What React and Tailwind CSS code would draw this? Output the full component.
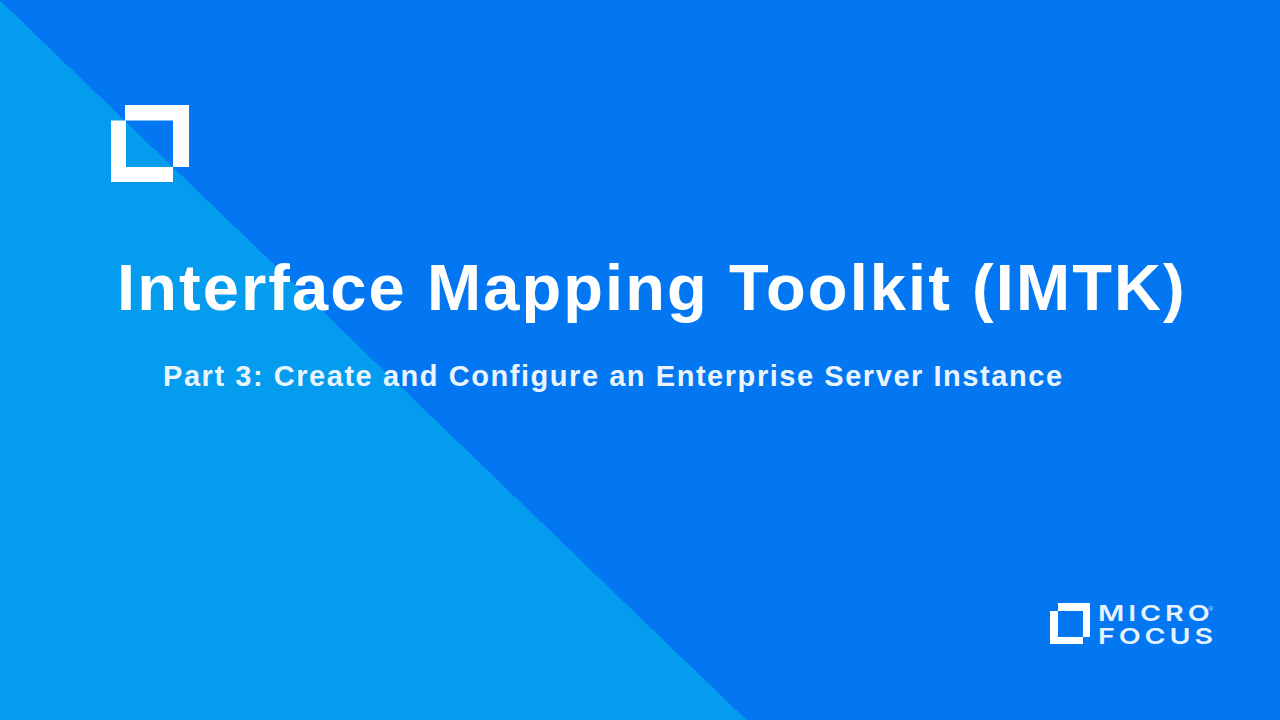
const SquareLogo = () => (
  <svg className="block ml-[111px] w-[78px] h-[77px] shrink-0" viewBox="111 105 78 77" fill="#fff">
    <polygon points="125,105 189,105 189,167 173,167 173,120.5 125,120.5" />
    <polygon points="111,120.5 126,120.5 126,167 173,167 173,182 111,182" />
  </svg>
);

const SmallLogo = () => (
  <svg className="block w-[40px] h-[41px] shrink-0" viewBox="0 0 40 41" fill="#fff">
    <polygon points="8,0 40,0 40,34 33,34 33,8 8,8" />
    <polygon points="0,8 8,8 8,34 33,34 33,41 0,41" />
  </svg>
);

const App = () => {
  return (
    <div className="w-[1280px] h-[720px] overflow-hidden flex flex-col pt-[105px] font-['Liberation_Sans',sans-serif] text-white bg-[linear-gradient(43.95deg,#049cee_518px,#0277f1_518px)]">
      <SquareLogo />
      <h1 className="mt-[70px] ml-[117px] text-[65px] leading-[72px] tracking-[2.1px] font-bold whitespace-nowrap">
        Interface Mapping Toolkit (IMTK)
      </h1>
      <h2 className="mt-[34px] ml-[163px] text-[29px] leading-[36px] tracking-[1.55px] font-bold whitespace-nowrap text-[#e9f4fd]">
        Part 3: Create and Configure an Enterprise Server Instance
      </h2>
      <div className="mt-auto mb-[72px] mr-[73px] self-end flex items-start gap-2">
        <SmallLogo />
        <div className="relative w-[109px] -mt-[1px]">
          <div className="origin-left scale-x-[1.3] font-['Inter',sans-serif] font-semibold text-[22px] leading-[23px] tracking-[3px] text-[#e6f2fe]">
            <div>MICRO</div>
            <div>FOCUS</div>
          </div>
          <span className="absolute top-[3px] left-[110px] font-['Inter',sans-serif] text-[8px] leading-[8px] text-[#9fcdfa]">®</span>
        </div>
      </div>
    </div>
  );
};

export default App;
